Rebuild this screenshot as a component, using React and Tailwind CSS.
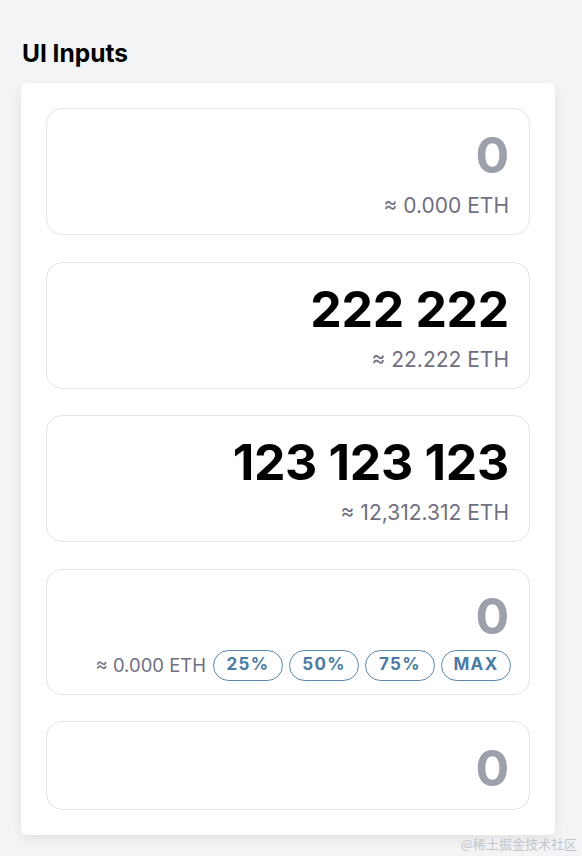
import React from "react";

const font = { fontFamily: "Inter, 'Noto Sans', sans-serif" };

function Pill({ children }) {
  return (
    <div className="flex h-[31px] w-[70px] items-center justify-center rounded-full border-[1.5px] border-[#5a88ad] text-[17px] font-bold tracking-[0.08em] text-[#4b7ba1]">
      {children}
    </div>
  );
}

function AmountBox({ value, placeholder, sub, pills, noSub }) {
  return (
    <div
      className={`flex flex-col items-end rounded-2xl border border-[#e4e4e7] bg-white px-5 pt-[21px] ${
        noSub ? "pb-[15.5px]" : pills ? "pb-[13px]" : "pb-[14px]"
      }`}
    >
      <div
        className={`text-[50px] font-bold leading-[50px] tracking-[-0.3px] ${
          placeholder ? "text-[#9ca0aa]" : "text-black"
        }`}
      >
        {value}
      </div>
      {!noSub && !pills && (
        <div className="mt-3 text-[21px] leading-7 text-[#6f6f80]">{sub}</div>
      )}
      {pills && (
        <div className="mr-[-2px] mt-[9px] flex h-[31px] items-center gap-[6px]">
          <span className="mr-[1px] text-[18.5px] leading-7 text-[#6f6f80]">{sub}</span>
          <Pill>25%</Pill>
          <Pill>50%</Pill>
          <Pill>75%</Pill>
          <Pill>MAX</Pill>
        </div>
      )}
    </div>
  );
}

export default function App() {
  return (
    <div className="relative min-h-[856px] w-full bg-[#f3f4f6] pt-[37px]" style={font}>
      <h1 className="ml-[22px] text-[24.5px] font-bold leading-8 text-black">UI Inputs</h1>
      <div className="ml-[21px] mt-[14px] flex w-[534px] flex-col gap-[26.5px] rounded-md bg-white p-[25px] shadow-[0_4px_12px_rgba(0,0,0,0.08)]">
        <AmountBox value="0" placeholder sub="≈ 0.000 ETH" />
        <AmountBox value="222 222" sub="≈ 22.222 ETH" />
        <AmountBox value="123 123 123" sub="≈ 12,312.312 ETH" />
        <AmountBox value="0" placeholder sub="≈ 0.000 ETH" pills />
        <AmountBox value="0" placeholder noSub />
      </div>
      <div
        className="absolute bottom-[4px] right-[5px] text-[13px] leading-4 text-[#c4c4c8]"
        style={{ fontFamily: "'Noto Sans CJK SC', sans-serif" }}
      >
        @稀土掘金技术社区
      </div>
    </div>
  );
}
